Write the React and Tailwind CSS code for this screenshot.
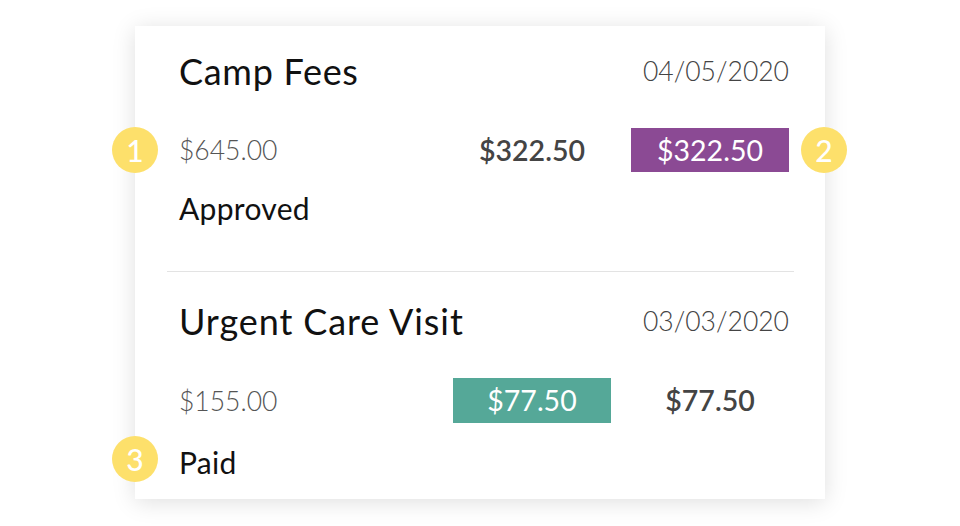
import React from "react";

const Dot = ({ n, className }) => (
  <div
    className={`absolute flex h-[46px] w-[46px] items-center justify-center rounded-full bg-[#FDE06B] text-[30px] font-medium leading-none text-white ${className}`}
  >
    {n}
  </div>
);

export default function App() {
  return (
    <div
      className="flex h-[526px] w-[960px] justify-center bg-white pt-[26px]"
      style={{ fontFamily: "Lato, 'Open Sans', sans-serif" }}
    >
      <div className="flex h-[473px] w-[690px] flex-col bg-white pb-[21px] pt-[25px] shadow-[0_3px_22px_rgba(0,0,0,0.13)]">
        {/* Item 1 */}
        <div className="flex flex-col pl-[44px] pr-[36px]">
          <div className="flex h-[40px] items-center justify-between">
            <span className="text-[36px] font-normal tracking-[0.7px] text-[#111]">Camp Fees</span>
            <span className="translate-y-[1px] text-[26.5px] font-light text-[#444]">04/05/2020</span>
          </div>
          <div className="relative mt-[37px] grid h-[44px] grid-cols-[1fr_158px_158px] items-center gap-x-[20px]">
            <Dot n="1" className="left-[-67px] top-[-1px]" />
            <span className="translate-y-[1px] text-[26.5px] font-light text-[#555]">$645.00</span>
            <span className="text-center text-[28.5px] font-semibold text-[#444]">$322.50</span>
            <span className="flex h-[44px] items-center justify-center bg-[#8B4A94] text-[28.5px] text-white">
              $322.50
            </span>
            <Dot n="2" className="right-[-58px] top-[-1px]" />
          </div>
          <div className="mt-[21px] flex h-[30px] items-center">
            <span className="text-[30px] tracking-[0.3px] text-[#111]">Approved</span>
          </div>
        </div>

        <div className="ml-[32px] mr-[31px] mt-[48px] h-px bg-[#e3e3e3]" />

        {/* Item 2 */}
        <div className="flex flex-col pl-[44px] pr-[36px]">
          <div className="mt-[29px] flex h-[40px] items-center justify-between">
            <span className="text-[36px] font-normal tracking-[0.9px] text-[#111]">Urgent Care Visit</span>
            <span className="translate-y-[1px] text-[26.5px] font-light text-[#444]">03/03/2020</span>
          </div>
          <div className="mt-[37px] grid h-[45px] grid-cols-[1fr_158px_158px] items-center gap-x-[20px]">
            <span className="translate-y-[1px] text-[26.5px] font-light text-[#555]">$155.00</span>
            <span className="flex h-[45px] items-center justify-center bg-[#55A898] text-[28.5px] text-white">
              $77.50
            </span>
            <span className="text-center text-[28.5px] font-semibold text-[#444]">$77.50</span>
          </div>
          <div className="relative mt-[24px] flex h-[30px] items-center">
            <Dot n="3" className="left-[-67px] top-[-11px]" />
            <span className="text-[30px] tracking-[0.3px] text-[#111]">Paid</span>
          </div>
        </div>
      </div>
    </div>
  );
}
